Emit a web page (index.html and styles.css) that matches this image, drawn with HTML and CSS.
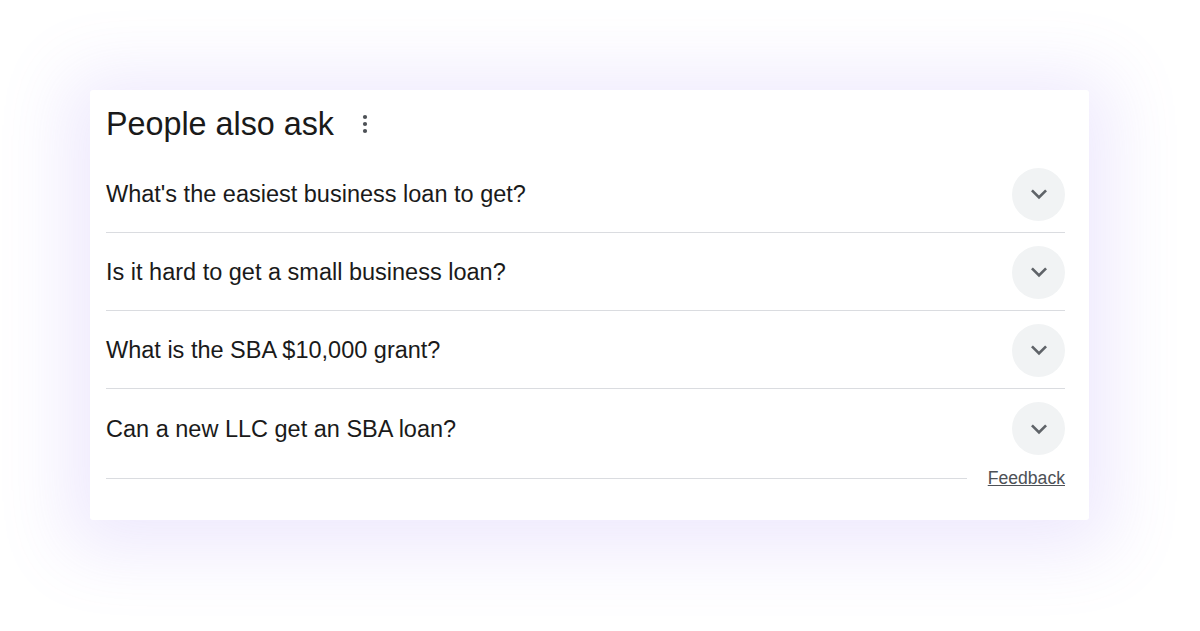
FILE: index.html
```html
<!DOCTYPE html>
<html lang="en">
<head>
<meta charset="utf-8">
<title>People also ask</title>
<link rel="stylesheet" href="styles.css">
</head>
<body>
<div class="page">
  <section class="card">
    <header class="card-head">
      <h2 class="title">People also ask</h2>
      <button class="more" aria-label="More options">
        <svg width="8" height="24" viewBox="0 0 8 24"><circle cx="4" cy="5" r="2.1"/><circle cx="4" cy="12" r="2.1"/><circle cx="4" cy="19" r="2.1"/></svg>
      </button>
    </header>
    <ul class="questions">
      <li class="q"><span class="q-text">What's the easiest business loan to get?</span><span class="toggle"><svg viewBox="0 0 24 24" width="32" height="32"><path d="M16.59 8.59L12 13.17 7.41 8.59 6 10l6 6 6-6z"/></svg></span></li>
      <li class="q"><span class="q-text">Is it hard to get a small business loan?</span><span class="toggle"><svg viewBox="0 0 24 24" width="32" height="32"><path d="M16.59 8.59L12 13.17 7.41 8.59 6 10l6 6 6-6z"/></svg></span></li>
      <li class="q"><span class="q-text">What is the SBA $10,000 grant?</span><span class="toggle"><svg viewBox="0 0 24 24" width="32" height="32"><path d="M16.59 8.59L12 13.17 7.41 8.59 6 10l6 6 6-6z"/></svg></span></li>
      <li class="q"><span class="q-text">Can a new LLC get an SBA loan?</span><span class="toggle"><svg viewBox="0 0 24 24" width="32" height="32"><path d="M16.59 8.59L12 13.17 7.41 8.59 6 10l6 6 6-6z"/></svg></span></li>
    </ul>
    <footer class="card-foot">
      <span class="rule"></span>
      <a class="feedback" href="#">Feedback</a>
    </footer>
  </section>
</div>
</body>
</html>
```

FILE: styles.css
```css
* { box-sizing: border-box; }
html, body { margin: 0; padding: 0; background: #ffffff; }
body {
  font-family: "Liberation Sans", Arial, sans-serif;
  color: #202124;
  width: 1200px;
  height: 631px;
  overflow: hidden;
}
.page {
  padding: 90px 111px 0 90px;
}
.card {
  width: 999px;
  height: 430px;
  background: #ffffff;
  border-radius: 3px;
  padding: 0 24px 0 16px;
  box-shadow: 0 8px 70px 22px rgba(150, 120, 245, 0.16);
}
.card-head {
  height: 65px;
  padding-top: 3px;
  display: flex;
  align-items: center;
}
.title {
  margin: 0;
  font-size: 32.3px;
  font-weight: 400;
  line-height: 40px;
  color: #1a1a1a;
}
.more {
  margin-left: 27px;
  border: 0;
  background: none;
  padding: 0;
  width: 8px;
  height: 24px;
  display: flex;
  fill: #4d5156;
}
.questions {
  list-style: none;
  margin: 0;
  padding: 0;
}
.q {
  height: 78px;
  display: flex;
  align-items: center;
  justify-content: space-between;
  border-bottom: 1px solid #dadce0;
  padding-top: 1px;
}
.q:last-child {
  border-bottom: 0;
}
.q-text {
  font-size: 23.5px;
  line-height: 30px;
  color: #1a1a1a;
}
.toggle {
  width: 53px;
  height: 53px;
  border-radius: 50%;
  background: #f1f3f4;
  display: flex;
  align-items: center;
  justify-content: center;
  fill: #5f6368;
}
.card-foot {
  display: flex;
  align-items: center;
  height: 22px;
}
.rule {
  flex: 1;
  height: 1px;
  background: #dadce0;
  margin-right: 21px;
}
.feedback {
  font-size: 17.6px;
  line-height: 22px;
  color: #4d5156;
  text-decoration: underline;
}
```
